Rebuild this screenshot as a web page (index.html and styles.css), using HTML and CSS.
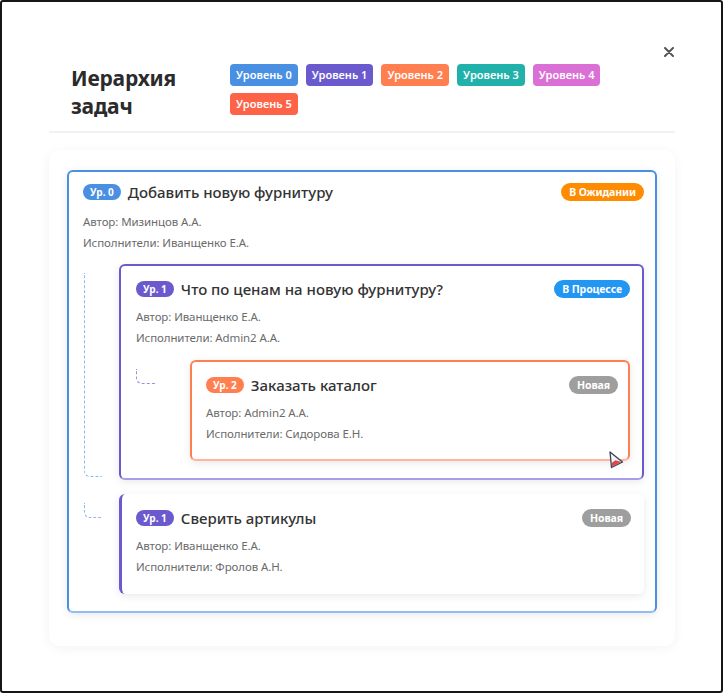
FILE: index.html
```html
<!DOCTYPE html>
<html lang="ru">
<head>
<meta charset="utf-8">
<title>Иерархия задач</title>
<link rel="stylesheet" href="styles.css">
</head>
<body>
<div class="modal">
  <button class="close" type="button" aria-label="Закрыть">
    <svg width="10" height="10" viewBox="0 0 10 10"><path d="M1 1L9 9M9 1L1 9" stroke="#555" stroke-width="2" stroke-linecap="round"/></svg>
  </button>
  <header class="modal-header">
    <h2 class="title">Иерархия задач</h2>
    <div class="legend">
      <span class="chip c0">Уровень 0</span>
      <span class="chip c1">Уровень 1</span>
      <span class="chip c2">Уровень 2</span>
      <span class="chip c3">Уровень 3</span>
      <span class="chip c4">Уровень 4</span>
      <span class="chip c5">Уровень 5</span>
    </div>
  </header>
  <div class="panel">
    <div class="task task-l0">
      <div class="task-head">
        <span class="tag c0">Ур. 0</span>
        <span class="task-title">Добавить новую фурнитуру</span>
        <span class="status st-wait">В Ожидании</span>
      </div>
      <div class="meta">Автор: Мизинцов А.А.</div>
      <div class="meta">Исполнители: Иванщенко Е.А.</div>
      <div class="children children-l0">
        <div class="child child-long">
          <div class="task task-l1">
            <div class="task-head">
              <span class="tag c1">Ур. 1</span>
              <span class="task-title">Что по ценам на новую фурнитуру?</span>
              <span class="status st-progress">В Процессе</span>
            </div>
            <div class="meta">Автор: Иванщенко Е.А.</div>
            <div class="meta">Исполнители: Admin2 А.А.</div>
            <div class="children children-l1">
              <div class="child child-short">
                <div class="task task-l2">
                  <div class="task-head">
                    <span class="tag c2">Ур. 2</span>
                    <span class="task-title">Заказать каталог</span>
                    <span class="status st-new">Новая</span>
                  </div>
                  <div class="meta">Автор: Admin2 А.А.</div>
                  <div class="meta">Исполнители: Сидорова Е.Н.</div>
                </div>
              </div>
            </div>
          </div>
        </div>
        <div class="child child-short">
          <div class="task task-l1-plain">
            <div class="task-head">
              <span class="tag c1">Ур. 1</span>
              <span class="task-title">Сверить артикулы</span>
              <span class="status st-new">Новая</span>
            </div>
            <div class="meta">Автор: Иванщенко Е.А.</div>
            <div class="meta">Исполнители: Фролов А.Н.</div>
          </div>
        </div>
      </div>
    </div>
  </div>
  <svg class="cursor" width="18" height="20" viewBox="0 0 18 20">
    <path d="M3 3L15.5 13L4.5 18.5Z" fill="#f4f4f6" stroke="#3b4150" stroke-width="1.3" stroke-linejoin="round"/>
    <path d="M5 17.4L14.3 13.1L8.5 11.2L4.6 14Z" fill="#e0444c"/>
  </svg>
</div>
</body>
</html>
```

FILE: styles.css
```css
* { box-sizing: border-box; }

html, body {
  margin: 0;
  padding: 0;
  background: #fff;
}

body {
  font-family: "Noto Sans", "Open Sans", Arial, sans-serif;
  color: #333;
}

.modal {
  position: relative;
  width: 723px;
  height: 693px;
  border: 2px solid #161616;
  border-radius: 3px;
  padding: 0 46px 0 47px;
  background: #fff;
}

.close {
  position: absolute;
  top: 43px;
  right: 45px;
  width: 14px;
  height: 14px;
  padding: 2px;
  border: 0;
  background: none;
  display: flex;
  align-items: center;
  justify-content: center;
  cursor: pointer;
}

.modal-header {
  display: flex;
  align-items: flex-start;
  padding: 62px 0 11px 22px;
  border-bottom: 2px solid #f2f2f2;
}

.title {
  flex: 0 0 159px;
  margin: 0;
  font-size: 21px;
  line-height: 28px;
  font-weight: 700;
  letter-spacing: -0.2px;
  color: #2b2b2b;
}

.legend {
  flex: 1;
  display: flex;
  flex-wrap: wrap;
  gap: 7px 8px;
  padding-right: 30px;
}

.chip {
  display: inline-block;
  height: 22px;
  line-height: 22px;
  padding: 0 6px;
  border-radius: 4px;
  color: #fff;
  font-size: 11px;
  font-weight: 600;
  white-space: nowrap;
}

.c0 { background: #4a90e2; }
.c1 { background: #6a5acd; }
.c2 { background: #ff7f50; }
.c3 { background: #20b2aa; }
.c4 { background: #da70d6; }
.c5 { background: #ff6347; }

.panel {
  margin-top: 17px;
  padding: 20px 18px 33px;
  background: #fff;
  border-radius: 10px;
  box-shadow: 0 2px 12px rgba(0, 0, 0, 0.05);
}

.task {
  background: #fff;
  border-radius: 6px;
  box-shadow: 0 2px 8px rgba(0, 0, 0, 0.09);
}

.task-l0 {
  border: 2px solid #4a90e2;
  border-bottom-color: #92bdf0;
  padding: 10px 11px 15px 14px;
}

.task-l0 > .task-head { margin-bottom: 9px; }
.task-l0 > .children { margin-top: 11px; }

.task-l1 {
  border: 2px solid #6a5acd;
  border-bottom-color: #a89dea;
  padding: 13px 12px 15px 15px;
}

.task-l2 {
  border: 2px solid #ff7f50;
  border-bottom-color: #ffb49b;
  padding: 13px 10px 15px 14px;
}

.task-l1-plain {
  border-left: 3px solid #6a5acd;
  padding: 14px 13px 17px 14px;
}

.task-head {
  display: flex;
  align-items: center;
  gap: 7px;
  height: 20px;
  margin-bottom: 7px;
}

.tag {
  flex: none;
  height: 16px;
  line-height: 16px;
  padding: 0 7px;
  border-radius: 8px;
  color: #fff;
  font-size: 10px;
  font-weight: 700;
}

.task-title {
  flex: 1;
  font-size: 15px;
  font-weight: 500;
  color: #333;
  white-space: nowrap;
}

.status {
  flex: none;
  height: 18px;
  line-height: 18px;
  padding: 0 8px;
  border-radius: 9px;
  color: #fff;
  font-size: 10.5px;
  font-weight: 700;
  letter-spacing: -0.1px;
}

.st-wait { background: #ff8c00; }
.st-progress { background: #2196f3; }
.st-new { background: #9e9e9e; }

.meta {
  font-size: 11.5px;
  line-height: 21px;
  letter-spacing: -0.1px;
  color: #6b6b6b;
}

.children {
  display: flex;
  flex-direction: column;
  gap: 14px;
  margin: 12px 0 2px;
}

.children-l0 { padding-left: 36px; }
.children-l1 { padding-left: 54px; }

.child {
  position: relative;
}

.child::before {
  content: "";
  position: absolute;
  top: 9px;
  border-left: 1px dashed;
  border-bottom: 1px dashed;
  border-bottom-left-radius: 6px;
}

.children-l0 > .child::before {
  left: -35px;
  width: 17px;
  border-color: #8fb8ec;
}

.children-l1 > .child::before {
  left: -54px;
  width: 19px;
  border-color: #9a8fe0;
}

.child-long::before { height: 203px; }
.child-short::before { height: 14px; }

.cursor {
  position: absolute;
  left: 605px;
  top: 447px;
}
```
